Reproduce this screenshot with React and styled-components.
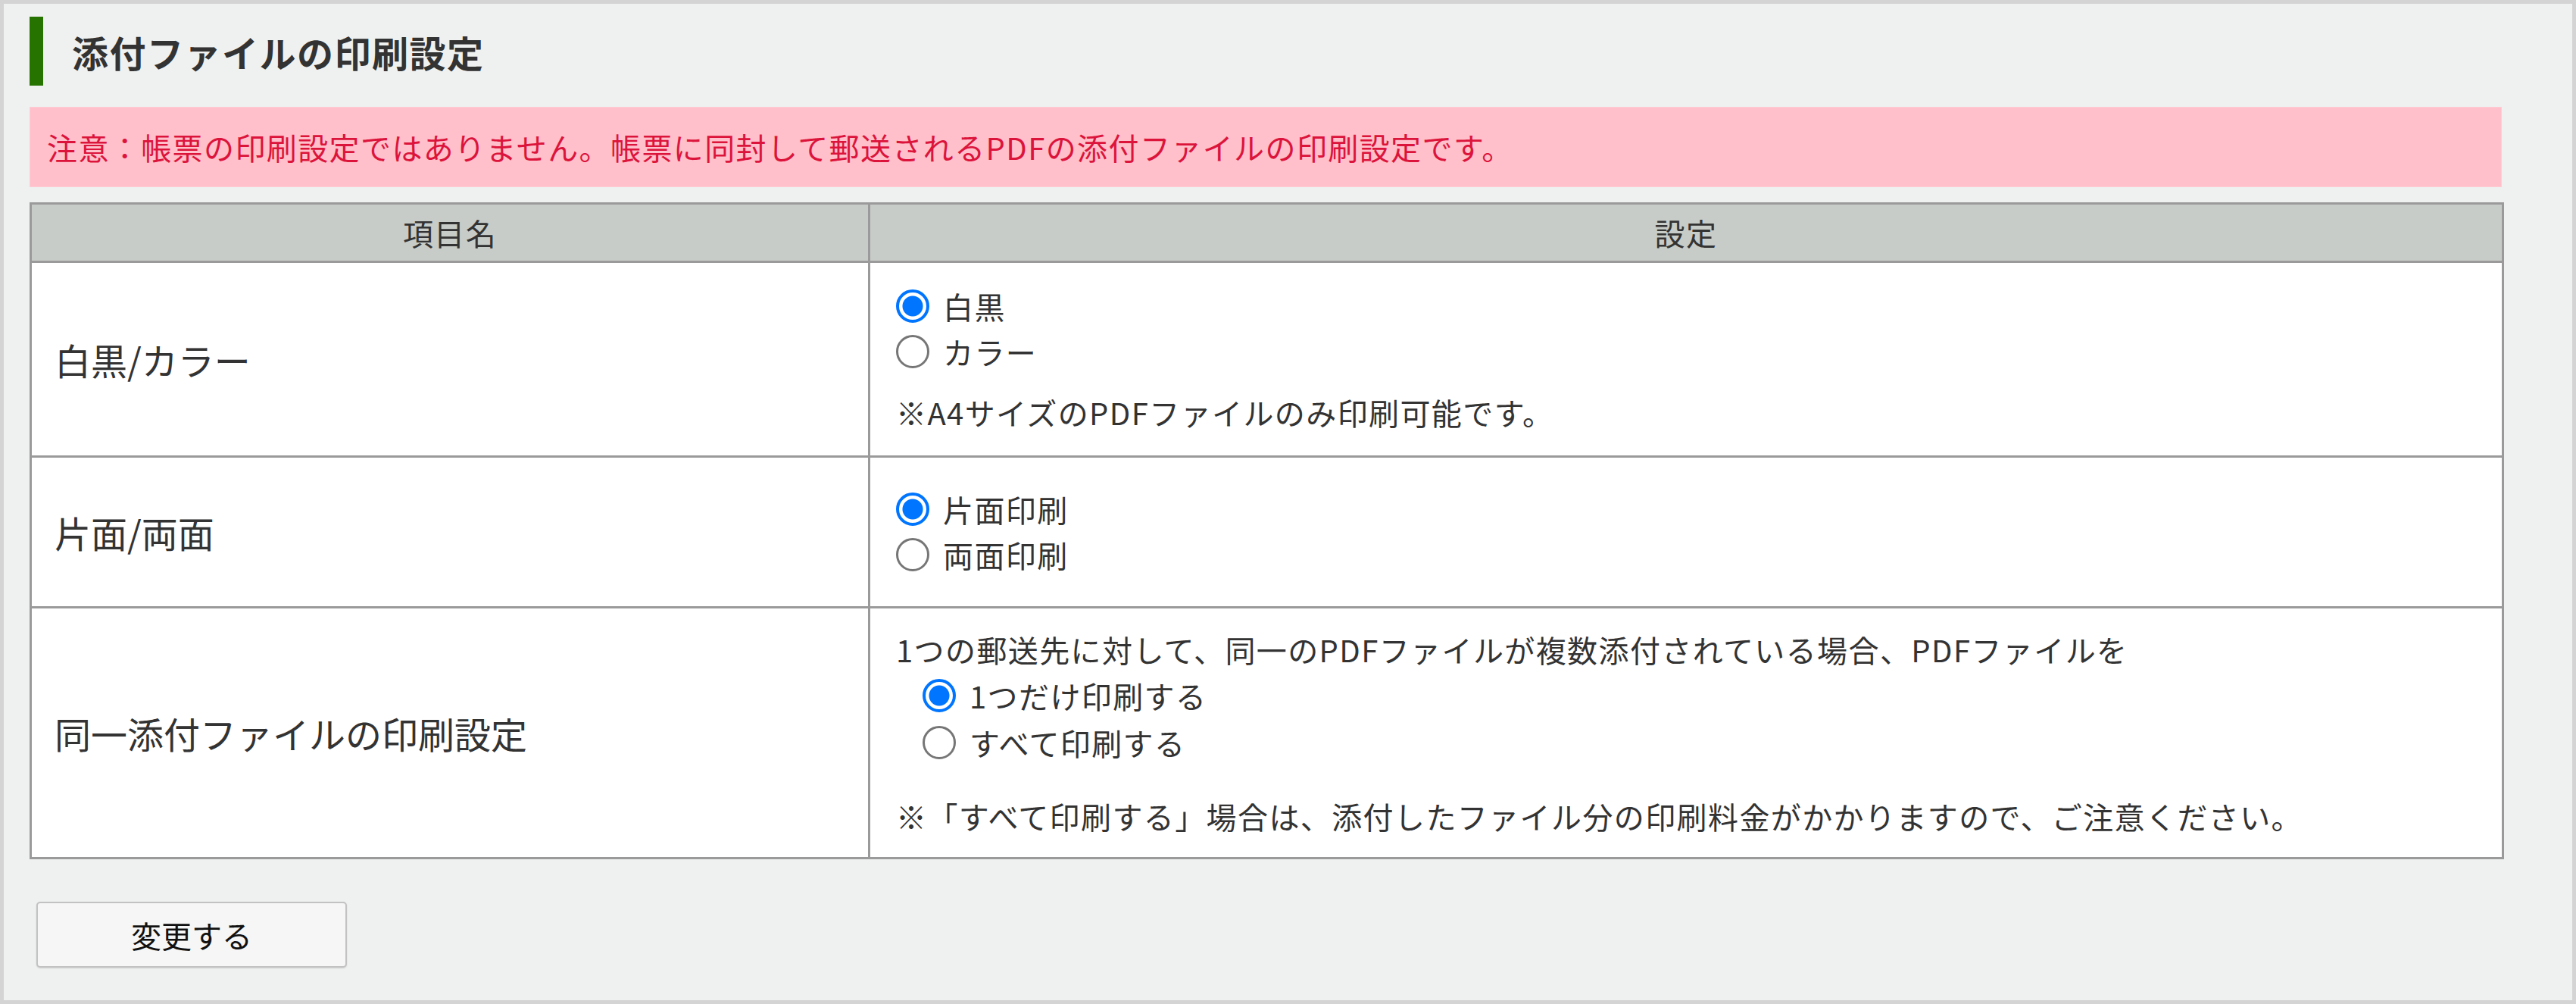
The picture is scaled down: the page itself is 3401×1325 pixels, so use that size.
import React from 'react';
import styled, { createGlobalStyle } from 'styled-components';

const GlobalStyle = createGlobalStyle`
  html, body {
    margin: 0;
    padding: 0;
    background: #d4d4d4;
  }
  body {
    font-family: "Noto Sans CJK JP", "Noto Sans", sans-serif;
    color: #333;
  }
`;

const Frame = styled.div`
  width: 3401px;
  height: 1325px;
  box-sizing: border-box;
  border: 5px solid #d4d4d4;
  background: #eff1f0;
  padding: 17px 0 0 34px;
`;

const TitleBar = styled.h2`
  display: flex;
  align-items: center;
  height: 91px;
  margin: 0;
  border-left: 18px solid #267300;
  padding-left: 38px;
  font-size: 48px;
  font-weight: 700;
  letter-spacing: 1.5px;
  color: #333;
  line-height: 1;
`;

const Notice = styled.div`
  width: 3264px;
  height: 106px;
  box-sizing: border-box;
  margin-top: 28px;
  padding-left: 22px;
  display: flex;
  align-items: center;
  background: #ffc0cb;
  border: 1px solid #ffccd4;
  color: #dc143c;
  font-size: 40px;
  letter-spacing: 1.4px;
`;

const Table = styled.table`
  width: 3267px;
  margin-top: 20px;
  border-collapse: collapse;
  background: #fff;
  table-layout: fixed;
`;

const HeadCell = styled.th`
  height: 74px;
  padding: 0;
  background: #c8ccc8;
  border: 3px solid #9a9a9a;
  font-size: 40px;
  font-weight: 400;
  letter-spacing: 1.4px;
  color: #333;
  text-align: center;
  width: ${({ $w }) => $w || 'auto'};
`;

const LabelCell = styled.td`
  border: 3px solid #9a9a9a;
  padding: 0 0 0 30px;
  font-size: 48px;
  color: #333;
  vertical-align: middle;
`;

const SettingCell = styled.td`
  border: 3px solid #9a9a9a;
  padding: ${({ $pad }) => $pad || 24}px 0 ${({ $pad }) => $pad || 24}px 34px;
  font-size: 40px;
  line-height: 60px;
  letter-spacing: 1.4px;
  color: #333;
  vertical-align: middle;
`;

const RadioGroup = styled.div`
  display: flex;
  flex-direction: column;
  padding-left: ${({ $indent }) => $indent || 0}px;
`;

const RadioRow = styled.label`
  display: flex;
  align-items: center;
  height: ${({ $h }) => $h || 60}px;
  gap: 18px;
`;

const Radio = styled.span`
  width: 44px;
  height: 44px;
  box-sizing: border-box;
  border-radius: 50%;
  flex: none;
  border: ${({ $on }) => ($on ? '4px solid #0075ff' : '3px solid #767676')};
  background: ${({ $on }) =>
    $on ? 'radial-gradient(circle, #0075ff 0 13px, #fff 14px)' : '#fff'};
`;

const Note = styled.div`
  margin-top: ${({ $gap }) => $gap}px;
`;

const Footer = styled.div`
  margin-top: 56px;
  padding-left: 9px;
`;

const Button = styled.button`
  width: 410px;
  height: 87px;
  box-sizing: border-box;
  background: #f5f6f5;
  border: 2px solid #c2c2c2;
  border-radius: 5px;
  box-shadow: 0 1px 2px rgba(0, 0, 0, 0.12);
  font-family: "Noto Sans CJK JP", "Noto Sans", sans-serif;
  font-size: 40px;
  color: #111;
  cursor: pointer;
`;

function RadioList({ options, checked, indent, h }) {
  return (
    <RadioGroup $indent={indent}>
      {options.map((opt) => (
        <RadioRow key={opt} $h={h}>
          <Radio $on={opt === checked} />
          {opt}
        </RadioRow>
      ))}
    </RadioGroup>
  );
}

export default function App() {
  return (
    <>
      <GlobalStyle />
      <Frame>
        <TitleBar>添付ファイルの印刷設定</TitleBar>
        <Notice>
          注意：帳票の印刷設定ではありません。帳票に同封して郵送されるPDFの添付ファイルの印刷設定です。
        </Notice>
        <Table>
          <thead>
            <tr>
              <HeadCell $w="1104px">項目名</HeadCell>
              <HeadCell>設定</HeadCell>
            </tr>
          </thead>
          <tbody>
            <tr>
              <LabelCell>白黒/カラー</LabelCell>
              <SettingCell $pad={27}>
                <RadioList options={['白黒', 'カラー']} checked="白黒" />
                <Note $gap={20}>※A4サイズのPDFファイルのみ印刷可能です。</Note>
              </SettingCell>
            </tr>
            <tr>
              <LabelCell>片面/両面</LabelCell>
              <SettingCell $pad={38}>
                <RadioList options={['片面印刷', '両面印刷']} checked="片面印刷" />
              </SettingCell>
            </tr>
            <tr>
              <LabelCell>同一添付ファイルの印刷設定</LabelCell>
              <SettingCell>
                <div>1つの郵送先に対して、同一のPDFファイルが複数添付されている場合、PDFファイルを</div>
                <RadioList
                  options={['1つだけ印刷する', 'すべて印刷する']}
                  checked="1つだけ印刷する"
                  indent={35}
                  h={62}
                />
                <Note $gap={36}>※「すべて印刷する」場合は、添付したファイル分の印刷料金がかかりますので、ご注意ください。</Note>
              </SettingCell>
            </tr>
          </tbody>
        </Table>
        <Footer>
          <Button type="button">変更する</Button>
        </Footer>
      </Frame>
    </>
  );
}
